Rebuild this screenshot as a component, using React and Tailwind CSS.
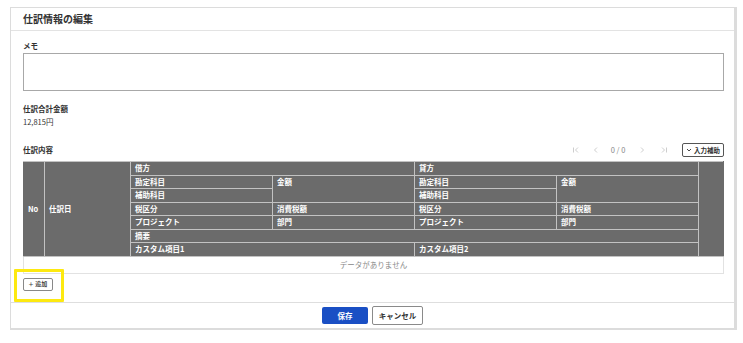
import React from "react";

const F = { fontFamily: '"Noto Sans CJK JP", "Noto Sans", sans-serif' };

function Th({ children, className = "", ...rest }) {
  return (
    <th
      {...rest}
      className={
        "border border-[#c2c2c2] bg-[#6b6b6b] text-white font-bold text-left px-[4px] py-0 text-[7.5px] leading-[12px] " +
        className
      }
    >
      {children}
    </th>
  );
}

export default function App() {
  return (
    <div style={F} className="w-[743px] h-[343px] bg-white pt-[7px] pl-[10px]">
      <div className="relative w-[727px] h-[323px] bg-white border border-[#dcdcdc] border-r-[3px] border-b-[2px] flex flex-col">
        <div className="h-[23px] shrink-0 border-b border-[#e3e3e3] flex items-center pl-[12px]">
          <span className="text-[10px] font-bold text-[#333] leading-none">仕訳情報の編集</span>
        </div>
        <div className="pl-[12px] pr-[10px] pt-[9px] pb-[11px] border-b border-[#dedede]">
          <div className="text-[7.5px] font-bold text-[#333] leading-[12px]">メモ</div>
          <div className="mt-[1px] h-[38px] w-[701px] border border-[#a8a8a8]"></div>
          <div className="mt-[12px] text-[7.5px] font-bold text-[#333] leading-[12px]">仕訳合計金額</div>
          <div className="mt-[1px] text-[7.5px] text-[#333] leading-[12px]">12,815円</div>
          <div className="mt-[15px] h-[14px] w-[701px] flex items-center justify-between">
            <span className="text-[7.5px] font-bold text-[#333] leading-none">仕訳内容</span>
            <div className="flex items-center">
              <div className="flex items-center text-[7.5px] mr-[8px]">
                <div className="w-[20px] flex justify-center">
                  <svg width="8" height="8" viewBox="0 0 8 8">
                    <path d="M1.5 1.5v5M6 1.5L3.5 4 6 6.5" fill="none" stroke="#c0c0c0" strokeWidth="0.8" />
                  </svg>
                </div>
                <div className="w-[20px] flex justify-center">
                  <svg width="8" height="8" viewBox="0 0 8 8">
                    <path d="M5 1.5L2.5 4 5 6.5" fill="none" stroke="#c0c0c0" strokeWidth="0.8" />
                  </svg>
                </div>
                <div className="w-[24px] flex justify-center">
                  <span className="text-[#888] leading-none">0 / 0</span>
                </div>
                <div className="w-[24px] flex justify-center">
                  <svg width="8" height="8" viewBox="0 0 8 8">
                    <path d="M3 1.5L5.5 4 3 6.5" fill="none" stroke="#c0c0c0" strokeWidth="0.8" />
                  </svg>
                </div>
                <div className="w-[20px] flex justify-center">
                  <svg width="8" height="8" viewBox="0 0 8 8">
                    <path d="M2 1.5L4.5 4 2 6.5M6.5 1.5v5" fill="none" stroke="#c0c0c0" strokeWidth="0.8" />
                  </svg>
                </div>
              </div>
              <div className="h-[14px] w-[42px] border border-[#555] rounded-[2px] flex items-center justify-center gap-[2px]">
                <svg width="6" height="6" viewBox="0 0 6 6">
                  <path d="M1 2l2 2 2-2" fill="none" stroke="#333" strokeWidth="0.9" />
                </svg>
                <span className="text-[6.5px] font-bold text-[#333] leading-none">入力補助</span>
              </div>
            </div>
          </div>
          <table className="mt-[4px] w-[700px] border-collapse table-fixed">
            <colgroup>
              <col style={{ width: 21 }} />
              <col style={{ width: 86 }} />
              <col style={{ width: 142 }} />
              <col style={{ width: 142 }} />
              <col style={{ width: 142 }} />
              <col style={{ width: 142 }} />
              <col style={{ width: 25 }} />
            </colgroup>
            <thead>
              <tr className="h-[13.5px]">
                <Th rowSpan={7} className="border-l-[#6b6b6b]">No</Th>
                <Th rowSpan={7}>仕訳日</Th>
                <Th colSpan={2}>借方</Th>
                <Th colSpan={2}>貸方</Th>
                <Th rowSpan={7} className="border-r-[#6b6b6b]"></Th>
              </tr>
              <tr className="h-[13.5px]">
                <Th>勘定科目</Th>
                <Th rowSpan={2} className="align-top">金額</Th>
                <Th>勘定科目</Th>
                <Th rowSpan={2} className="align-top">金額</Th>
              </tr>
              <tr className="h-[13.5px]">
                <Th>補助科目</Th>
                <Th>補助科目</Th>
              </tr>
              <tr className="h-[13.5px]">
                <Th>税区分</Th>
                <Th>消費税額</Th>
                <Th>税区分</Th>
                <Th>消費税額</Th>
              </tr>
              <tr className="h-[13.5px]">
                <Th>プロジェクト</Th>
                <Th>部門</Th>
                <Th>プロジェクト</Th>
                <Th>部門</Th>
              </tr>
              <tr className="h-[13.5px]">
                <Th colSpan={4}>摘要</Th>
              </tr>
              <tr className="h-[13.5px]">
                <Th colSpan={2}>カスタム項目1</Th>
                <Th colSpan={2}>カスタム項目2</Th>
              </tr>
            </thead>
            <tbody>
              <tr className="h-[17px]">
                <td colSpan={7} className="border border-[#e2e2e2] text-center text-[7.5px] text-[#888] leading-none">
                  データがありません
                </td>
              </tr>
            </tbody>
          </table>
          <div className="mt-[4px] h-[13px] w-[30px] border border-[#888] rounded-[2px] flex items-center justify-center gap-[2px]">
            <span className="text-[8px] text-[#444] leading-none">+</span>
            <span className="text-[6px] font-bold text-[#444] leading-none">追加</span>
          </div>
        </div>
        <div className="flex-1 flex items-center justify-center gap-[4px]">
          <div className="h-[17px] w-[46px] bg-[#1a4fc4] rounded-[2px] flex items-center justify-center">
            <span className="text-[7.5px] font-bold text-white leading-none">保存</span>
          </div>
          <div className="h-[19px] w-[51px] border border-[#8a8a8a] rounded-[2px] bg-white flex items-center justify-center">
            <span className="text-[7.5px] font-bold text-[#333] leading-none">キャンセル</span>
          </div>
        </div>
        <div className="absolute left-[3px] top-[261px] w-[50px] h-[33px] border-[3px] border-[#fde910] rounded-[1px]"></div>
      </div>
    </div>
  );
}
